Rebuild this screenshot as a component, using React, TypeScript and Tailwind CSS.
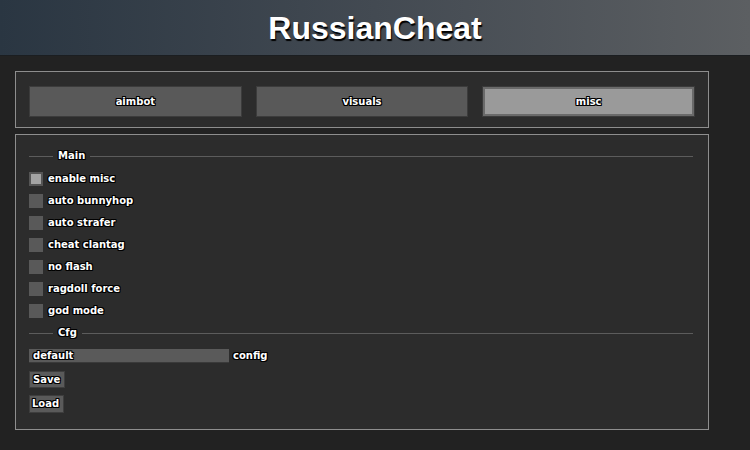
import React from 'react'

const OUTLINE =
  '[text-shadow:1px_0_0_#000,-1px_0_0_#000,0_1px_0_#000,0_-1px_0_#000,1px_1px_0_#000,-1px_-1px_0_#000,1px_-1px_0_#000,-1px_1px_0_#000]'

const tabs = ['aimbot', 'visuals', 'misc']

const options = [
  { label: 'enable misc', on: true },
  { label: 'auto bunnyhop', on: false },
  { label: 'auto strafer', on: false },
  { label: 'cheat clantag', on: false },
  { label: 'no flash', on: false },
  { label: 'ragdoll force', on: false },
  { label: 'god mode', on: false },
]

function Legend({ title }: { title: string }) {
  return (
    <div className="flex h-[14px] items-center">
      <div className="h-px w-[24px] bg-[#5c5c5c]" />
      <span className={`px-[5px] text-white ${OUTLINE}`}>{title}</span>
      <div className="mr-[2px] h-px flex-1 bg-[#5c5c5c]" />
    </div>
  )
}

export default function App() {
  return (
    <div
      className="h-[450px] w-[750px] overflow-hidden bg-[#222222] text-[10px] font-bold leading-none"
      style={{ fontFamily: '"DejaVu Sans", Verdana, sans-serif' }}
    >
      {/* header */}
      <header className="h-[56px] border-b border-[#1b1e21] bg-gradient-to-r from-[#2a3642] via-[#434a52] to-[#5c5f62]">
        <h1
          className="pt-[1px] text-center text-[32px] leading-[55px] font-bold text-white [text-shadow:1px_2px_1px_#000]"
          style={{ fontFamily: '"Liberation Sans", Arial, sans-serif' }}
        >
          RussianCheat
        </h1>
      </header>

      <div className="flex w-[709px] flex-col gap-[6px] pt-[15px] pl-[15px]">
        {/* tabs */}
        <div className="border border-[#8e8e8e] bg-[#2c2c2c] px-[13px] pt-[14px] pb-[10px]">
          <div className="grid grid-cols-3 gap-[14px]">
            {tabs.map((t) =>
              t === 'misc' ? (
                <div
                  key={t}
                  className="flex h-[31px] items-center justify-center border border-[#3a3a3a] bg-[#6a6a6a] p-[2px]"
                >
                  <div className={`flex h-full w-full items-center justify-center bg-[#9a9a9a] text-white ${OUTLINE}`}>
                    {t}
                  </div>
                </div>
              ) : (
                <div
                  key={t}
                  className={`flex h-[31px] items-center justify-center border border-[#3c3c3c] bg-[#595959] text-white ${OUTLINE}`}
                >
                  {t}
                </div>
              )
            )}
          </div>
        </div>

        {/* main panel */}
        <div className="flex h-[296px] flex-col border border-[#8e8e8e] bg-[#2c2c2c] px-[13px] pt-[14px]">
          <Legend title="Main" />

          <div className="mt-[9px] flex flex-col gap-[8px]">
            {options.map((o) => (
              <div key={o.label} className="flex h-[14px] items-center gap-[5px]">
                {o.on ? (
                  <div className="h-[14px] w-[14px] border-2 border-[#555555] bg-[#a3a3a3]" />
                ) : (
                  <div className="h-[14px] w-[14px] bg-[#595959]" />
                )}
                <span className={`text-white ${OUTLINE}`}>{o.label}</span>
              </div>
            ))}
          </div>

          <div className="mt-[8px]">
            <Legend title="Cfg" />
          </div>

          <div className="mt-[9px] flex h-[14px] items-center gap-[4px]">
            <div className={`flex h-[14px] w-[200px] items-center border-b border-[#3a3a3a] bg-[#5a5a5a] pl-[4px] text-white ${OUTLINE}`}>
              default
            </div>
            <span className={`text-white ${OUTLINE}`}>config</span>
          </div>

          <div className="mt-[8px] flex flex-col items-start gap-[7px]">
            <button
              type="button"
              className={`h-[17px] w-[36px] border border-[#3e3e3e] bg-[#5a5a5a] pl-[3px] text-left text-white ${OUTLINE}`}
            >
              Save
            </button>
            <button
              type="button"
              className={`h-[18px] w-[35px] border border-[#3e3e3e] bg-[#5a5a5a] pl-[2px] text-left text-white ${OUTLINE}`}
            >
              Load
            </button>
          </div>
        </div>
      </div>
    </div>
  )
}
